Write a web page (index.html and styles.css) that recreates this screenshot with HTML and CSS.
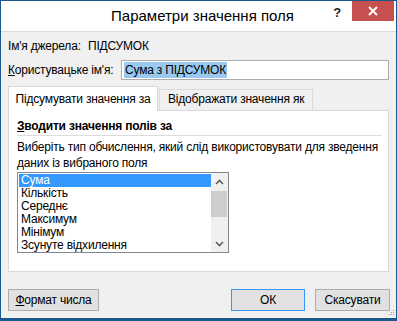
FILE: index.html
```html
<!DOCTYPE html>
<html lang="uk">
<head>
    <meta charset="UTF-8">
    <title>Параметри значення поля</title>
    <link rel="stylesheet" href="styles.css">
</head>
<body>

    <div class="window">
        <!-- Title bar -->
        <div class="titlebar">
            <div class="title">Параметри значення поля</div>
            <div class="help">?</div>
            <div class="close">
                <svg width="10" height="10" viewBox="0 0 10 10"><path d="M1 1 L9 9 M9 1 L1 9" stroke="#fff" stroke-width="2"/></svg>
            </div>
        </div>

        <div class="dialog">
            <div class="row source">
                <span class="label">Ім'я джерела:</span>
                <span class="value">ПІДСУМОК</span>
            </div>
            <div class="row custom">
                <label class="label-wide"><u>К</u>ористувацьке ім'я:</label>
                <div class="input"><span class="sel">Сума з ПІДСУМОК</span></div>
            </div>

            <!-- Tabs -->
            <div class="tabs">
                <div class="tab active">Підсумувати значення за</div>
                <div class="tab">Відображати значення як</div>
            </div>

            <div class="panel">
                <div class="group-title"><u>З</u>водити значення полів за</div>
                <div class="separator"></div>
                <p class="hint">Виберіть тип обчислення, який слід використовувати для зведення<br>даних із вибраного поля</p>

                <div class="listbox">
                    <ul class="items">
                        <li class="selected">Сума</li>
                        <li>Кількість</li>
                        <li>Середнє</li>
                        <li>Максимум</li>
                        <li>Мінімум</li>
                        <li>Зсунуте відхилення</li>
                    </ul>
                    <div class="scrollbar">
                        <div class="arrow">
                            <svg width="9" height="6" viewBox="0 0 9 6"><path d="M1 5 L4.5 1.5 L8 5" fill="none" stroke="#606060" stroke-width="1.6"/></svg>
                        </div>
                        <div class="track"><div class="thumb"></div></div>
                        <div class="arrow">
                            <svg width="9" height="6" viewBox="0 0 9 6"><path d="M1 1 L4.5 4.5 L8 1" fill="none" stroke="#606060" stroke-width="1.6"/></svg>
                        </div>
                    </div>
                </div>
            </div>

            <!-- Buttons -->
            <div class="buttons">
                <button class="btn btn-format"><u>Ф</u>ормат числа</button>
                <div class="spacer"></div>
                <button class="btn btn-ok">ОК</button>
                <button class="btn btn-cancel">Скасувати</button>
            </div>
        </div>

        <svg class="grip" width="8" height="8" viewBox="0 0 8 8">
            <rect x="6" y="0" width="1" height="1" fill="#9a9a9a"/>
            <rect x="4" y="2" width="1" height="1" fill="#9a9a9a"/>
            <rect x="6" y="2" width="1" height="1" fill="#9a9a9a"/>
            <rect x="2" y="4" width="1" height="1" fill="#9a9a9a"/>
            <rect x="4" y="4" width="1" height="1" fill="#9a9a9a"/>
            <rect x="6" y="4" width="1" height="1" fill="#9a9a9a"/>
        </svg>
    </div>

</body>
</html>
```

FILE: styles.css
```css
* {
    box-sizing: border-box;
}
body {
    margin: 0;
    padding: 0;
    font-family: "Liberation Sans", Arial, sans-serif;
    font-size: 12px;
    letter-spacing: -0.2px;
    color: #000;
    background-color: #fff;
}
.window {
    width: 397px;
    height: 321px;
    border: 1px solid #1d5790;
    border-bottom-width: 3px;
    background-color: #f0f0f0;
    display: flex;
    flex-direction: column;
    position: relative;
    white-space: nowrap;
}
.titlebar {
    height: 31px;
    flex-shrink: 0;
    background-color: #fff;
    border-bottom: 1px solid #dadada;
    display: flex;
    align-items: flex-start;
}
.title {
    flex: 1;
    padding-left: 78px;
    text-align: center;
    font-size: 15px;
    letter-spacing: 0;
    line-height: 29px;
}
.help {
    width: 22px;
    font-weight: bold;
    font-size: 13px;
    line-height: 24px;
    color: #222;
    margin-right: 4px;
    text-align: center;
}
.close {
    width: 42px;
    height: 20px;
    margin-right: 2px;
    background-color: #c75050;
    display: flex;
    align-items: center;
    justify-content: center;
}
.dialog {
    flex: 1;
    padding: 6px 7px 0 7px;
    display: flex;
    flex-direction: column;
}
.row {
    display: flex;
    align-items: center;
    line-height: 16px;
}
.source .label {
    width: 80px;
}
.custom {
    margin-top: 6px;
}
.label-wide {
    width: 113px;
}
.input {
    flex: 1;
    height: 20px;
    background-color: #fff;
    border: 1px solid #abadb3;
    padding: 1px 2px;
    line-height: 16px;
}
.sel {
    background-color: #99c9ef;
    display: inline-block;
    padding: 0 1px;
}
/* Tabs */
.tabs {
    margin-top: 6px;
    display: flex;
    align-items: flex-end;
}
.tab {
    height: 21px;
    border: 1px solid #d9d9d9;
    border-bottom: none;
    padding: 0 8px;
    line-height: 19px;
    background-color: #f0f0f0;
    margin-left: 1px;
}
.tab.active {
    height: 25px;
    width: 150px;
    background-color: #fff;
    margin-left: 0;
    margin-bottom: -1px;
    position: relative;
    line-height: 24px;
    text-align: center;
    padding: 0;
}
.panel {
    height: 162px;
    flex-shrink: 0;
    background-color: #fff;
    border: 1px solid #d9d9d9;
    padding: 7px 6px 0 8px;
}
.group-title {
    font-weight: bold;
    line-height: 16px;
}
.separator {
    height: 1px;
    background-color: #dcdcdc;
    margin-top: 1px;
}
.hint {
    margin: 3px 0 1px 0;
    line-height: 16px;
}
.listbox {
    width: 212px;
    height: 81px;
    border: 1px solid #828790;
    display: flex;
}
.items {
    list-style: none;
    margin: 0;
    padding: 1px 0 0 1px;
    flex: 1;
}
.items li {
    height: 13px;
    line-height: 13px;
    padding-left: 2px;
}
.items li.selected {
    background-color: #3399ff;
    color: #fff;
}
.scrollbar {
    width: 17px;
    background-color: #f0f0f0;
    display: flex;
    flex-direction: column;
}
.arrow {
    height: 17px;
    display: flex;
    align-items: center;
    justify-content: center;
}
.track {
    flex: 1;
    padding: 1px 1px 0 0;
}
.thumb {
    height: 26px;
    background-color: #cdcdcd;
}
/* Buttons */
.buttons {
    margin-top: 17px;
    display: flex;
}
.spacer {
    flex: 1;
}
.btn {
    height: 22px;
    font-family: inherit;
    font-size: 12px;
    letter-spacing: -0.2px;
    background-color: #e1e1e1;
    border: 1px solid #adadad;
    padding: 0;
    color: #000;
}
.btn-format {
    width: 91px;
}
.btn-ok {
    width: 74px;
    border-color: #3399ff;
    margin-right: 10px;
}
.btn-cancel {
    width: 75px;
    margin-right: -1px;
}
.grip {
    position: absolute;
    right: 1px;
    bottom: 0;
}
```
